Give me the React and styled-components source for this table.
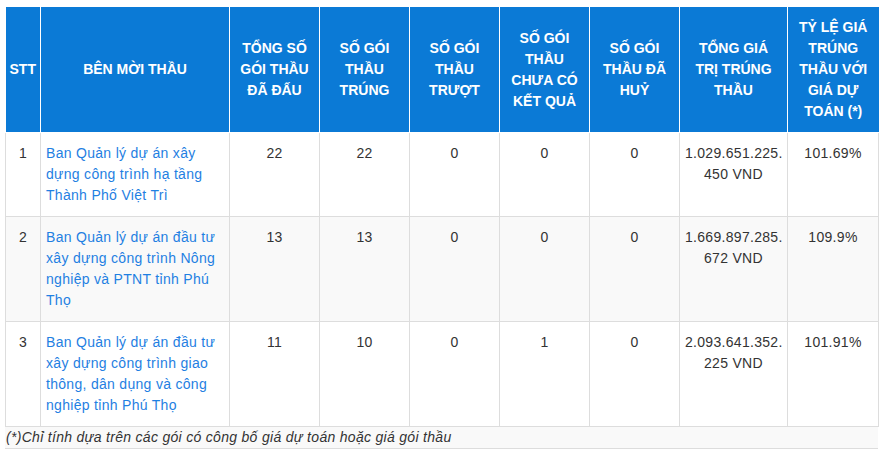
import React from "react";
import styled, { createGlobalStyle } from "styled-components";

const Global = createGlobalStyle`
  html, body { margin: 0; padding: 0; background: #fff; }
  body {
    padding: 7px 5px 0 5px;
    font-family: "Liberation Sans", Arial, sans-serif;
    font-size: 14px;
    line-height: 21px;
    color: #333;
  }
`;

const Wrap = styled.div`
  width: 873px;
`;

const Table = styled.table`
  width: 873px;
  table-layout: fixed;
  border-collapse: collapse;
  border-spacing: 0;
`;

const HeadCell = styled.th`
  background: #0b7ad6;
  color: #fff;
  font-weight: 700;
  text-transform: uppercase;
  text-align: center;
  vertical-align: middle;
  padding: 10px 8px;
  border: 1px solid #fff;
  border-top: none;
  &:first-child { border-left: none; padding: 10px 2px; }
  &:last-child { border-right: none; }
`;

const Row = styled.tr`
  background: ${(p) => (p.$striped ? "#f9f9f9" : "#fff")};
`;

const Cell = styled.td`
  padding: 10px 5px;
  border: 1px solid #ddd;
  vertical-align: top;
  letter-spacing: 0.3px;
  text-align: ${(p) => (p.$left ? "left" : "center")};
`;

const Link = styled.a`
  color: #1f80e2;
  text-decoration: none;
`;

const Note = styled.div`
  background: #f9f9f9;
  border-bottom: 1px solid #ddd;
  font-style: italic;
  letter-spacing: 0.3px;
  line-height: 21px;
  padding-left: 1px;
`;

const cols = [35, 189, 90, 90, 90, 90, 90, 108, 91];

const headers = [
  "STT",
  "Bên mời thầu",
  "Tổng số gói thầu đã đấu",
  "Số gói thầu trúng",
  "Số gói thầu trượt",
  "Số gói thầu chưa có kết quả",
  "Số gói thầu đã huỷ",
  "Tổng giá trị trúng thầu",
  "Tỷ lệ giá trúng thầu với giá dự toán (*)",
];

const rows = [
  {
    stt: 1,
    name: "Ban Quản lý dự án xây dựng công trình hạ tầng Thành Phố Việt Trì",
    total: 22, win: 22, lose: 0, pending: 0, cancel: 0,
    value: ["1.029.651.225.", "450 VND"],
    rate: "101.69%",
  },
  {
    stt: 2,
    name: "Ban Quản lý dự án đầu tư xây dựng công trình Nông nghiệp và PTNT tỉnh Phú Thọ",
    total: 13, win: 13, lose: 0, pending: 0, cancel: 0,
    value: ["1.669.897.285.", "672 VND"],
    rate: "109.9%",
  },
  {
    stt: 3,
    name: "Ban Quản lý dự án đầu tư xây dựng công trình giao thông, dân dụng và công nghiệp tỉnh Phú Thọ",
    total: 11, win: 10, lose: 0, pending: 1, cancel: 0,
    value: ["2.093.641.352.", "225 VND"],
    rate: "101.91%",
  },
];

export default function App() {
  return (
    <>
      <Global />
      <Wrap>
        <Table>
          <colgroup>
            {cols.map((w, i) => (
              <col key={i} style={{ width: w }} />
            ))}
          </colgroup>
          <thead>
            <tr>
              {headers.map((h) => (
                <HeadCell key={h}>{h}</HeadCell>
              ))}
            </tr>
          </thead>
          <tbody>
            {rows.map((r, i) => (
              <Row key={r.stt} $striped={i % 2 === 1}>
                <Cell>{r.stt}</Cell>
                <Cell $left>
                  <Link href="#">{r.name}</Link>
                </Cell>
                <Cell>{r.total}</Cell>
                <Cell>{r.win}</Cell>
                <Cell>{r.lose}</Cell>
                <Cell>{r.pending}</Cell>
                <Cell>{r.cancel}</Cell>
                <Cell>
                  {r.value[0]}
                  <wbr />
                  {r.value[1]}
                </Cell>
                <Cell>{r.rate}</Cell>
              </Row>
            ))}
          </tbody>
        </Table>
        <Note>(*)Chỉ tính dựa trên các gói có công bố giá dự toán hoặc giá gói thầu</Note>
      </Wrap>
    </>
  );
}
